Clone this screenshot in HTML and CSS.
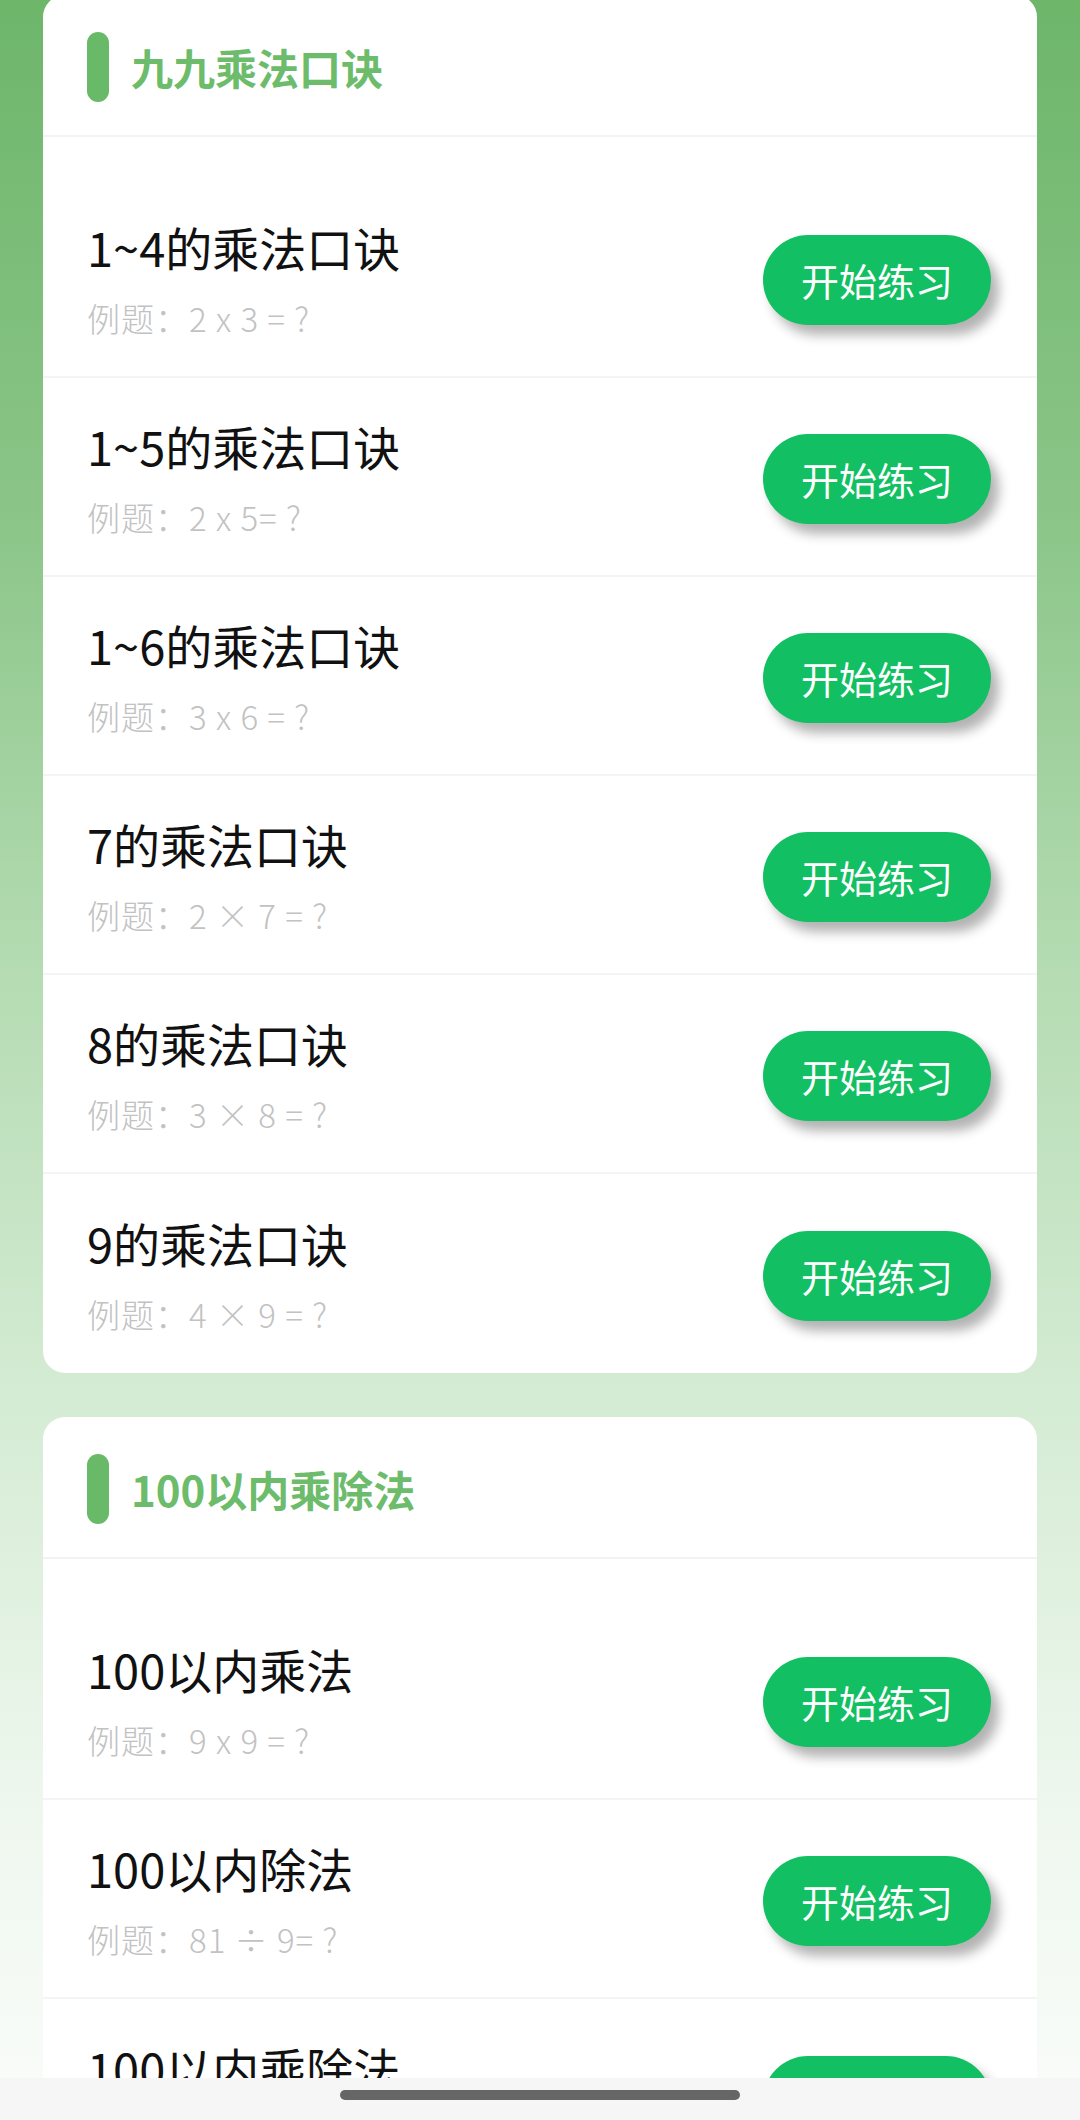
FILE: index.html
```html
<!DOCTYPE html>
<html lang="zh-CN">
<head>
    <meta charset="UTF-8">
    <meta name="viewport" content="width=device-width, initial-scale=1.0">
    <title>口算练习</title>
    <link rel="stylesheet" href="styles.css">
</head>

<body>
    <div class="page">
        <div class="card">
            <div class="card-header">
                <div class="mark"></div>
                <div class="card-title">九九乘法口诀</div>
            </div>
            <div class="list">
                <div class="row">
                    <div class="info">
                        <div class="name">1~4的乘法口诀</div>
                        <div class="example">例题：2 x 3 = ?</div>
                    </div>
                    <div class="start">开始练习</div>
                </div>
                <div class="row">
                    <div class="info">
                        <div class="name">1~5的乘法口诀</div>
                        <div class="example">例题：2 x 5= ?</div>
                    </div>
                    <div class="start">开始练习</div>
                </div>
                <div class="row">
                    <div class="info">
                        <div class="name">1~6的乘法口诀</div>
                        <div class="example">例题：3 x 6 = ?</div>
                    </div>
                    <div class="start">开始练习</div>
                </div>
                <div class="row">
                    <div class="info">
                        <div class="name">7的乘法口诀</div>
                        <div class="example">例题：2 × 7 = ?</div>
                    </div>
                    <div class="start">开始练习</div>
                </div>
                <div class="row">
                    <div class="info">
                        <div class="name">8的乘法口诀</div>
                        <div class="example">例题：3 × 8 = ?</div>
                    </div>
                    <div class="start">开始练习</div>
                </div>
                <div class="row">
                    <div class="info">
                        <div class="name">9的乘法口诀</div>
                        <div class="example">例题：4 × 9 = ?</div>
                    </div>
                    <div class="start">开始练习</div>
                </div>
            </div>
        </div>

        <div class="card">
            <div class="card-header">
                <div class="mark"></div>
                <div class="card-title">100以内乘除法</div>
            </div>
            <div class="list">
                <div class="row">
                    <div class="info">
                        <div class="name">100以内乘法</div>
                        <div class="example">例题：9 x 9 = ?</div>
                    </div>
                    <div class="start">开始练习</div>
                </div>
                <div class="row">
                    <div class="info">
                        <div class="name">100以内除法</div>
                        <div class="example">例题：81 ÷ 9= ?</div>
                    </div>
                    <div class="start">开始练习</div>
                </div>
                <div class="row">
                    <div class="info">
                        <div class="name">100以内乘除法</div>
                        <div class="example">例题：6 x 7 ÷ 2 = ?</div>
                    </div>
                    <div class="start">开始练习</div>
                </div>
            </div>
        </div>
    </div>

    <div class="nav-bar">
        <div class="home-pill"></div>
    </div>
</body>
</html>
```

FILE: styles.css
```css
*, *:before, *:after {
    box-sizing: border-box;
}

html, body {
    margin: 0;
    height: 2120px;
    overflow: hidden;
}

body {
    font-family: "Noto Sans CJK SC", "Noto Sans", sans-serif;
    background: linear-gradient(#6db66a 0%, #8cc689 25%, #b3dbb1 45%, #d3ebd2 65%, #eef7ee 85%, #fafcfa 100%);
}

.page {
    padding: 0 43px;
}

.card {
    background-color: #fff;
    border-radius: 22px;
    margin-bottom: 44px;
    overflow: hidden;
}

.card:first-child {
    margin-top: -5px;
}

.card-header {
    display: flex;
    align-items: center;
    height: 142px;
    padding: 3px 0 0 44px;
    border-bottom: 2px solid #f3f3f3;
}

.mark {
    width: 22px;
    height: 70px;
    border-radius: 11px;
    background-color: #68b968;
}

.card-title {
    margin-left: 22px;
    font-size: 42px;
    font-weight: 700;
    color: #6cbc6c;
}

.list {
    padding-top: 42px;
}

.row {
    display: flex;
    align-items: center;
    justify-content: space-between;
    height: 199px;
    padding: 40px 46px 30px 44px;
    border-bottom: 2px solid #f4f4f4;
}

.row:last-child {
    border-bottom: none;
}

.info {
    margin-bottom: 7px;
}

.name {
    font-size: 47px;
    line-height: 60px;
    color: #111;
}

.example {
    margin-top: 18px;
    font-size: 33px;
    line-height: 46px;
    letter-spacing: 1px;
    color: #c2c2c2;
    font-weight: 300;
}

.start {
    width: 228px;
    height: 90px;
    line-height: 90px;
    border-radius: 45px;
    margin-bottom: 6px;
    text-align: center;
    font-size: 38px;
    color: #fff;
    background-color: #12bf62;
    box-shadow: 8px 10px 12px rgba(0, 0, 0, 0.3);
}

.nav-bar {
    position: fixed;
    left: 0;
    right: 0;
    bottom: 0;
    height: 42px;
    background-color: #f6f6f6;
    display: flex;
    justify-content: center;
    padding-top: 12px;
}

.home-pill {
    width: 400px;
    height: 10px;
    border-radius: 5px;
    background-color: #666;
}
```
